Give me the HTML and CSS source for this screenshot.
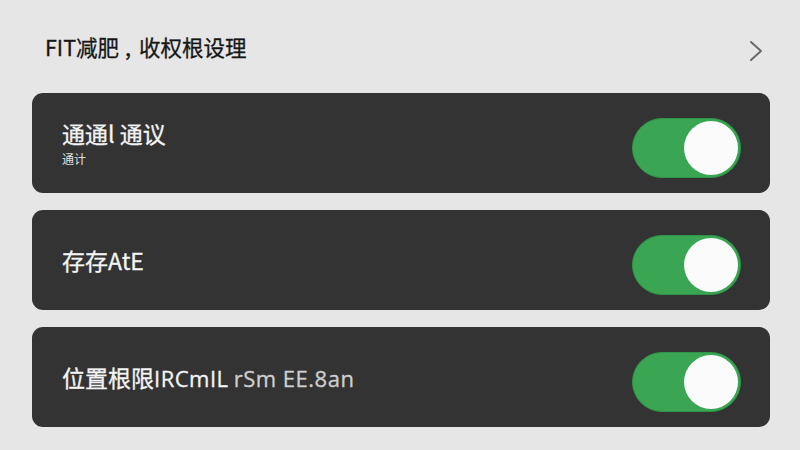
FILE: index.html
```html
<!DOCTYPE html>
<html lang="zh">
<head>
<meta charset="utf-8">
<link rel="stylesheet" href="styles.css">
</head>
<body>
<div class="page">
  <div class="header">
    <span class="header-title">FIT减肥<span class="comma">,</span>收权根设理</span>
    <svg class="chevron" width="14" height="22" viewBox="0 0 14 22"><polyline points="2,2 12,11 2,20" fill="none" stroke="#6a6a6a" stroke-width="2" stroke-linecap="round" stroke-linejoin="round"/></svg>
  </div>
  <div class="list">
    <div class="card">
      <div class="text">
        <div class="title">通通l 通议</div>
        <div class="sub">通计</div>
      </div>
      <div class="toggle"><div class="knob"></div></div>
    </div>
    <div class="card">
      <div class="text">
        <div class="title">存存AtE</div>
      </div>
      <div class="toggle"><div class="knob"></div></div>
    </div>
    <div class="card">
      <div class="text">
        <div class="title">位置根限<span class="latin">IRCmIL</span> <span class="latin dim">rSm EE.8an</span></div>
      </div>
      <div class="toggle"><div class="knob"></div></div>
    </div>
  </div>
</div>
</body>
</html>
```
FILE: styles.css
```css
html, body {
  margin: 0;
  padding: 0;
  background: #e6e6e6;
}
body {
  width: 800px;
  height: 450px;
  overflow: hidden;
  font-family: "Noto Sans", "Noto Sans CJK SC", sans-serif;
}
.page {
  padding: 0 30px 0 32px;
}
.header {
  height: 93px;
  display: flex;
  align-items: center;
  justify-content: space-between;
  padding: 0 7px 0 13px;
}
.header-title {
  font-family: "Noto Sans CJK SC", sans-serif;
  font-size: 21.5px;
  font-weight: 400;
  color: #161616;
  margin-top: -1px;
  -webkit-text-stroke: 0.3px #161616;
}
.comma {
  display: inline-block;
  margin: 0 8px 0 6px;
}
.chevron {
  display: block;
  margin-top: 9px;
}
.list {
  display: flex;
  flex-direction: column;
  gap: 17px;
}
.card {
  height: 100px;
  background: #333333;
  border-radius: 11px;
  display: flex;
  align-items: center;
  justify-content: space-between;
  padding: 0 29px 0 30px;
}
.title {
  font-family: "Noto Sans CJK SC", sans-serif;
  font-size: 23px;
  font-weight: 400;
  line-height: 26px;
  color: #f4f4f4;
  -webkit-text-stroke: 0.3px #f4f4f4;
}
.latin {
  font-family: "Open Sans", sans-serif;
  font-size: 22px;
  letter-spacing: 0.5px;
}
.dim {
  color: #cfcfcf;
  -webkit-text-stroke: 0.3px #cfcfcf;
}
.sub {
  font-family: "Noto Sans CJK SC", sans-serif;
  font-size: 12px;
  line-height: 14px;
  color: #e0e0e0;
  margin-top: 6px;
}
.toggle {
  width: 109px;
  height: 60px;
  box-sizing: border-box;
  border-radius: 30px;
  background: #3aa654;
  border: 1px solid #2f9447;
  display: flex;
  align-items: center;
  justify-content: flex-end;
  padding-right: 2px;
  margin-top: 10px;
}
.knob {
  width: 54px;
  height: 54px;
  border-radius: 50%;
  background: #fbfbfb;
}
```
